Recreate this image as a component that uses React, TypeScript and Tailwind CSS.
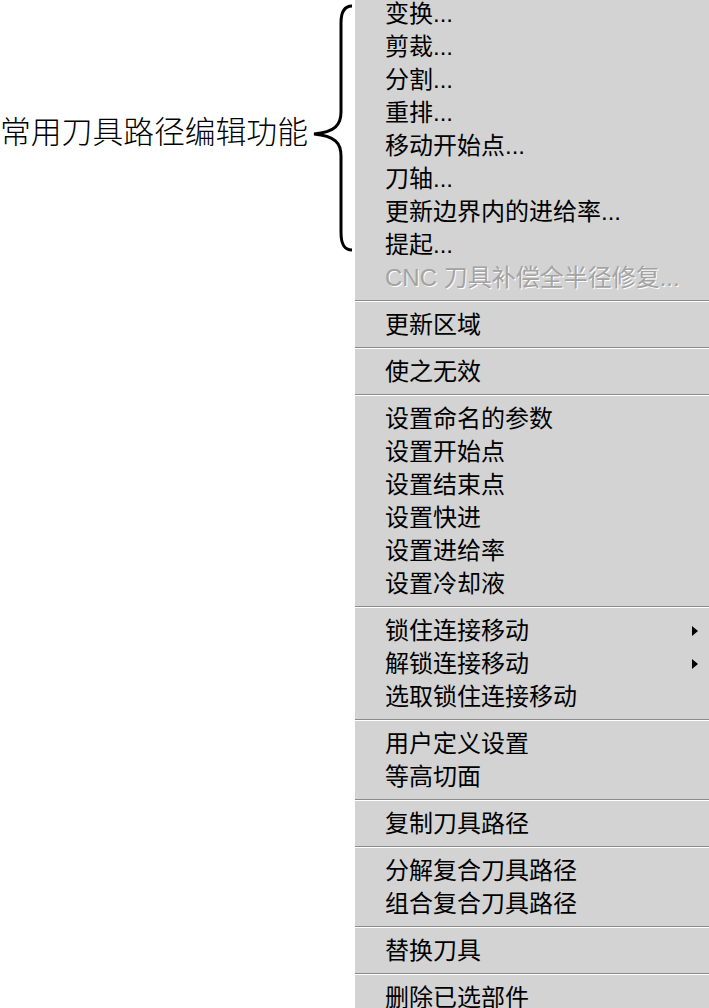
import React from 'react';

type Item = { label: string; disabled?: boolean; sub?: boolean };

const groups: Item[][] = [
  [
    { label: '变换...' },
    { label: '剪裁...' },
    { label: '分割...' },
    { label: '重排...' },
    { label: '移动开始点...' },
    { label: '刀轴...' },
    { label: '更新边界内的进给率...' },
    { label: '提起...' },
    { label: 'CNC 刀具补偿全半径修复...', disabled: true },
  ],
  [{ label: '更新区域' }],
  [{ label: '使之无效' }],
  [
    { label: '设置命名的参数' },
    { label: '设置开始点' },
    { label: '设置结束点' },
    { label: '设置快进' },
    { label: '设置进给率' },
    { label: '设置冷却液' },
  ],
  [
    { label: '锁住连接移动', sub: true },
    { label: '解锁连接移动', sub: true },
    { label: '选取锁住连接移动' },
  ],
  [{ label: '用户定义设置' }, { label: '等高切面' }],
  [{ label: '复制刀具路径' }],
  [{ label: '分解复合刀具路径' }, { label: '组合复合刀具路径' }],
  [{ label: '替换刀具' }],
  [{ label: '删除已选部件' }],
];

const Brace = () => (
  <svg width="47" height="260" viewBox="0 0 47 260" className="shrink-0">
    <path
      d="M44 6 C36 6 33 12 33 23 L33 112 C33 125 27 132 6 134 C27 136 33 143 33 156 L33 232 C33 244 36 250 44 250"
      fill="none"
      stroke="#000"
      strokeWidth="3"
    />
  </svg>
);

const MenuRow: React.FC<{ item: Item }> = ({ item }) => (
  <div className="flex h-[33px] items-center justify-between pl-[30px] pr-[11px]">
    <span
      className={
        item.disabled
          ? 'text-[#a3a3a3] [text-shadow:1px_1px_0_#ffffff]'
          : 'text-black'
      }
    >
      {item.label}
    </span>
    {item.sub && (
      <span className="h-0 w-0 border-y-[5px] border-l-[6px] border-y-transparent border-l-black" />
    )}
  </div>
);

const App: React.FC = () => {
  return (
    <div className="flex h-[1008px] w-[709px] overflow-hidden bg-white">
      <div className="flex h-[260px] w-[355px] shrink-0 items-center">
        <span className="whitespace-nowrap text-[30.8px] leading-none text-black font-light [font-family:'Noto_Sans_CJK_SC',serif]">
          常用刀具路径编辑功能
        </span>
        <Brace />
      </div>
      <div className="flex-1 bg-[#d3d3d3] text-[24px] [font-family:'Liberation_Sans','Noto_Sans_CJK_SC',sans-serif]">
        <div className="-mt-[3px]">
          {groups.map((g, gi) => (
            <div key={gi}>
              {gi > 0 && (
                <div className="flex h-[14px] flex-col justify-center">
                  <div className="h-px bg-[#8a8a8a]" />
                  <div className="h-px bg-white" />
                </div>
              )}
              {g.map((item) => (
                <MenuRow key={item.label} item={item} />
              ))}
            </div>
          ))}
        </div>
      </div>
    </div>
  );
};

export default App;
